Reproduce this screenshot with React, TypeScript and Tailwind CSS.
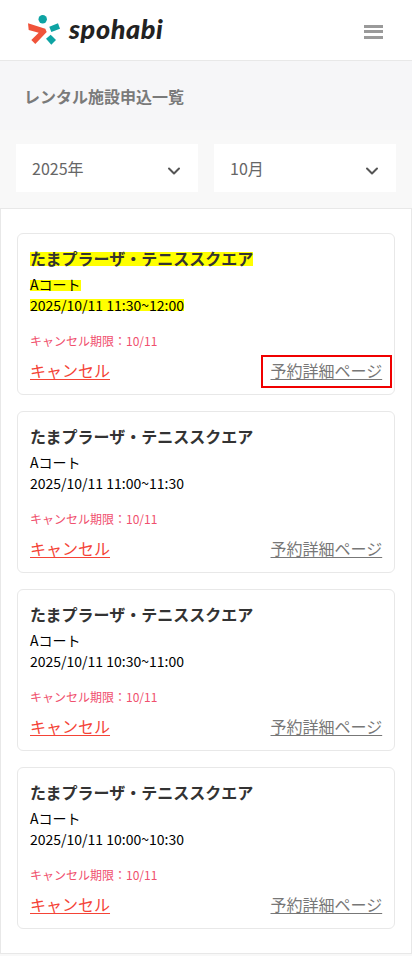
import { ChevronDown } from 'lucide-react'

const reservations = [
  { id: 1, time: '2025/10/11 11:30~12:00', active: true },
  { id: 2, time: '2025/10/11 11:00~11:30', active: false },
  { id: 3, time: '2025/10/11 10:30~11:00', active: false },
  { id: 4, time: '2025/10/11 10:00~10:30', active: false },
]

const Logo = () => (
  <div className="flex items-center">
    <svg width="34" height="32" viewBox="27 14 34 32" className="block">
      <circle cx="42.7" cy="19.3" r="4.2" fill="#0ea3a3" />
      <path d="M28 23.3 L45.3 28.7 L46.7 32 L35.3 44 L31.3 40 L38.7 32.7 L28.7 30 Z" fill="#f0533a" />
      <path d="M49.3 26.7 L58 23.3 L60 28.7 L51.3 32 Z" fill="#0ea3a3" />
      <path d="M46 38.7 L50.7 34.7 L56 40 L51.3 44.7 Z" fill="#0ea3a3" />
    </svg>
    <span className="ml-[8px] text-[27px] leading-none font-black italic tracking-[0.6px] text-[#222222] font-['Lato',sans-serif] -mt-1">
      spohabi
    </span>
  </div>
)

const SelectBox = ({ label }: { label: string }) => (
  <div className="flex-1 h-12 bg-white pl-4 pr-[14px] flex items-center justify-between text-base text-[#666666]">
    <span>{label}</span>
    <ChevronDown className="w-5 h-5 mt-[6px] text-[#555555]" strokeWidth={2.4} />
  </div>
)

const ReservationCard = ({ time, active }: { time: string; active: boolean }) => {
  const mark = active ? 'bg-[#ffff00]' : ''
  return (
    <div className="h-[162px] rounded-md border border-[#e8e8e8] bg-white pt-[13px] pl-[12px] pr-[2px]">
      <div className="h-[24px] flex items-center text-base font-bold text-[#333333]">
        <span className={`inline-block h-[14px] leading-[12px] ${mark}`}>たまプラーザ・テニススクエア</span>
      </div>
      <div className="mt-[4px] h-[21px] flex items-center text-sm text-black">
        <span className={`inline-block h-[11px] leading-[9px] ${mark}`}>Aコート</span>
      </div>
      <div className="-mt-[2px] h-[21px] flex items-center text-sm text-black">
        <span className={`inline-block h-[12px] leading-[12px] ${mark}`}>{time}</span>
      </div>
      <div className="mt-[17px] h-[18px] leading-[18px] text-xs text-[#f0506e]">キャンセル期限：10/11</div>
      <div className="mt-[5px] flex items-center justify-between">
        <a className="mb-[4px] text-base leading-[24px] text-[#f44336] underline underline-offset-2">キャンセル</a>
        <a
          className={`pl-[7.5px] pb-[4px] h-[33px] w-[131px] flex items-center text-base whitespace-nowrap text-[#777777] underline underline-offset-2 border-2 ${
            active ? 'border-[#f00000]' : 'border-transparent'
          }`}
        >
          予約詳細ページ
        </a>
      </div>
    </div>
  )
}

const App = () => {
  return (
    <div className="w-[412px] min-h-[956px] bg-[#f8f8f8] font-['Noto_Sans_CJK_JP','Noto_Sans',sans-serif]">
      <header className="h-[61px] bg-white border-b border-[#e8e8e8] pl-[27px] pr-[29px] flex items-center justify-between">
        <Logo />
        <div className="flex flex-col gap-[2.5px] w-[19px] mt-[3px]">
          <span className="h-[3px] bg-[#9a9a9a]" />
          <span className="h-[3px] bg-[#9a9a9a]" />
          <span className="h-[3px] bg-[#9a9a9a]" />
        </div>
      </header>

      <div className="h-[69px] bg-[#f6f6f8] pl-[24px] pt-[22px]">
        <h1 className="text-base leading-[26px] font-bold text-[#7a7a7a]">レンタル施設申込一覧</h1>
      </div>

      <div className="flex gap-4 px-4 pt-[14px] pb-4">
        <SelectBox label="2025年" />
        <SelectBox label="10月" />
      </div>

      <main className="border border-[#e8e8e8] bg-white px-4 pt-6 pb-6 flex flex-col gap-4 h-[746px]">
        {reservations.map((r) => (
          <ReservationCard key={r.id} time={r.time} active={r.active} />
        ))}
      </main>
    </div>
  )
}

export default App
